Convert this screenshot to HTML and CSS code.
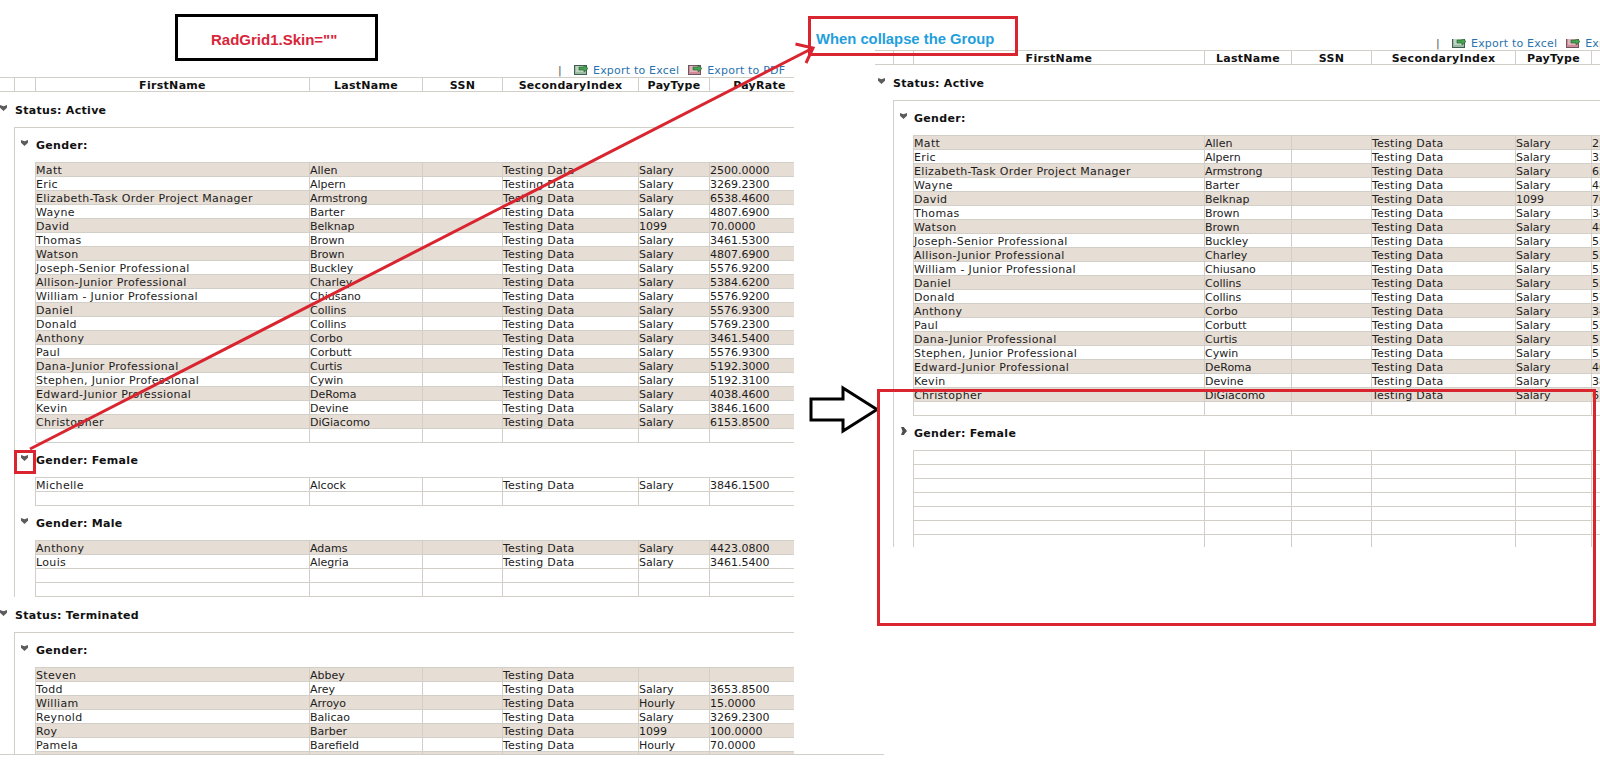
FILE: index.html
```html
<!DOCTYPE html>
<html lang="en">
<head>
<meta charset="utf-8">
<title>RadGrid group collapse</title>
<link rel="stylesheet" href="styles.css">
</head>
<body>
<section class="pane left">
  <div class="sheet">
    <div class="toolbar">
      <span class="pipe">|</span>
      <svg class="xl" viewBox="0 0 14 11"><rect x="0.5" y="1.5" width="12" height="9" fill="#9dbba0" stroke="#3f5f55"/><path d="M2 3h9M2 5h9M2 7h9" stroke="#e2ebe2"/><path d="M5 3h5V1l4 3.500-4 3.500V6H5z" fill="#47a34f" stroke="#1e5c2c" stroke-width="0.600"/></svg>
      <a class="link">Export to Excel</a>
      <svg class="xl pdf" viewBox="0 0 14 11"><rect x="0.5" y="1.500" width="12" height="9" fill="#d08a98" stroke="#6f5560"/><path d="M2 3h9M2 5h9M2 7h9" stroke="#f2dfe0"/><path d="M5 3h5V1l4 3.500-4 3.500V6H5z" fill="#47a34f" stroke="#1e5c2c" stroke-width="0.600"/></svg>
      <a class="link">Export to PDF</a>
    </div>
    <table class="g head">
      <colgroup><col class="h1"><col class="h2"><col class="c1"><col class="c2"><col class="c3"><col class="c4"><col class="c5"><col class="c6"></colgroup>
      <tr><th></th><th></th><th>FirstName</th><th>LastName</th><th>SSN</th><th>SecondaryIndex</th><th>PayType</th><th>PayRate</th></tr>
    </table>
    <div class="status"><i class="tog"></i>Status: Active</div>
    <div class="box">
      <div class="sub"><i class="tog"></i>Gender:</div>
      <table class="g data">
        <colgroup><col class="c1"><col class="c2"><col class="c3"><col class="c4"><col class="c5"><col class="c6"></colgroup>
        <tr class="alt"><td>Matt</td><td>Allen</td><td></td><td>Testing Data</td><td>Salary</td><td>2500.0000</td></tr>
        <tr><td>Eric</td><td>Alpern</td><td></td><td>Testing Data</td><td>Salary</td><td>3269.2300</td></tr>
        <tr class="alt"><td>Elizabeth-Task Order Project Manager</td><td>Armstrong</td><td></td><td>Testing Data</td><td>Salary</td><td>6538.4600</td></tr>
        <tr><td>Wayne</td><td>Barter</td><td></td><td>Testing Data</td><td>Salary</td><td>4807.6900</td></tr>
        <tr class="alt"><td>David</td><td>Belknap</td><td></td><td>Testing Data</td><td>1099</td><td>70.0000</td></tr>
        <tr><td>Thomas</td><td>Brown</td><td></td><td>Testing Data</td><td>Salary</td><td>3461.5300</td></tr>
        <tr class="alt"><td>Watson</td><td>Brown</td><td></td><td>Testing Data</td><td>Salary</td><td>4807.6900</td></tr>
        <tr><td>Joseph-Senior Professional</td><td>Buckley</td><td></td><td>Testing Data</td><td>Salary</td><td>5576.9200</td></tr>
        <tr class="alt"><td>Allison-Junior Professional</td><td>Charley</td><td></td><td>Testing Data</td><td>Salary</td><td>5384.6200</td></tr>
        <tr><td>William - Junior Professional</td><td>Chiusano</td><td></td><td>Testing Data</td><td>Salary</td><td>5576.9200</td></tr>
        <tr class="alt"><td>Daniel</td><td>Collins</td><td></td><td>Testing Data</td><td>Salary</td><td>5576.9300</td></tr>
        <tr><td>Donald</td><td>Collins</td><td></td><td>Testing Data</td><td>Salary</td><td>5769.2300</td></tr>
        <tr class="alt"><td>Anthony</td><td>Corbo</td><td></td><td>Testing Data</td><td>Salary</td><td>3461.5400</td></tr>
        <tr><td>Paul</td><td>Corbutt</td><td></td><td>Testing Data</td><td>Salary</td><td>5576.9300</td></tr>
        <tr class="alt"><td>Dana-Junior Professional</td><td>Curtis</td><td></td><td>Testing Data</td><td>Salary</td><td>5192.3000</td></tr>
        <tr><td>Stephen, Junior Professional</td><td>Cywin</td><td></td><td>Testing Data</td><td>Salary</td><td>5192.3100</td></tr>
        <tr class="alt"><td>Edward-Junior Professional</td><td>DeRoma</td><td></td><td>Testing Data</td><td>Salary</td><td>4038.4600</td></tr>
        <tr><td>Kevin</td><td>Devine</td><td></td><td>Testing Data</td><td>Salary</td><td>3846.1600</td></tr>
        <tr class="alt"><td>Christopher</td><td>DiGiacomo</td><td></td><td>Testing Data</td><td>Salary</td><td>6153.8500</td></tr>
        <tr><td></td><td></td><td></td><td></td><td></td><td></td></tr>
      </table>
      <div class="sub"><i class="tog"></i>Gender: Female</div>
      <table class="g data">
        <colgroup><col class="c1"><col class="c2"><col class="c3"><col class="c4"><col class="c5"><col class="c6"></colgroup>
        <tr><td>Michelle</td><td>Alcock</td><td></td><td>Testing Data</td><td>Salary</td><td>3846.1500</td></tr>
        <tr><td></td><td></td><td></td><td></td><td></td><td></td></tr>
      </table>
      <div class="sub"><i class="tog"></i>Gender: Male</div>
      <table class="g data">
        <colgroup><col class="c1"><col class="c2"><col class="c3"><col class="c4"><col class="c5"><col class="c6"></colgroup>
        <tr class="alt"><td>Anthony</td><td>Adams</td><td></td><td>Testing Data</td><td>Salary</td><td>4423.0800</td></tr>
        <tr><td>Louis</td><td>Alegria</td><td></td><td>Testing Data</td><td>Salary</td><td>3461.5400</td></tr>
        <tr><td></td><td></td><td></td><td></td><td></td><td></td></tr>
        <tr><td></td><td></td><td></td><td></td><td></td><td></td></tr>
      </table>
    </div>
    <div class="status"><i class="tog"></i>Status: Terminated</div>
    <div class="box">
      <div class="sub"><i class="tog"></i>Gender:</div>
      <table class="g data">
        <colgroup><col class="c1"><col class="c2"><col class="c3"><col class="c4"><col class="c5"><col class="c6"></colgroup>
        <tr class="alt"><td>Steven</td><td>Abbey</td><td></td><td>Testing Data</td><td></td><td></td></tr>
        <tr><td>Todd</td><td>Arey</td><td></td><td>Testing Data</td><td>Salary</td><td>3653.8500</td></tr>
        <tr class="alt"><td>William</td><td>Arroyo</td><td></td><td>Testing Data</td><td>Hourly</td><td>15.0000</td></tr>
        <tr><td>Reynold</td><td>Balicao</td><td></td><td>Testing Data</td><td>Salary</td><td>3269.2300</td></tr>
        <tr class="alt"><td>Roy</td><td>Barber</td><td></td><td>Testing Data</td><td>1099</td><td>100.0000</td></tr>
        <tr><td>Pamela</td><td>Barefield</td><td></td><td>Testing Data</td><td>Hourly</td><td>70.0000</td></tr>
        <tr class="alt"><td></td><td></td><td></td><td></td><td></td><td></td></tr>
      </table>
    </div>
  </div>
</section>

<section class="pane right">
  <div class="sheet">
    <div class="toolbar">
      <span class="pipe">|</span>
      <svg class="xl" viewBox="0 0 14 11"><rect x="0.5" y="1.5" width="12" height="9" fill="#9dbba0" stroke="#3f5f55"/><path d="M2 3h9M2 5h9M2 7h9" stroke="#e2ebe2"/><path d="M5 3h5V1l4 3.500-4 3.500V6H5z" fill="#47a34f" stroke="#1e5c2c" stroke-width="0.600"/></svg>
      <a class="link">Export to Excel</a>
      <svg class="xl pdf" viewBox="0 0 14 11"><rect x="0.5" y="1.500" width="12" height="9" fill="#d08a98" stroke="#6f5560"/><path d="M2 3h9M2 5h9M2 7h9" stroke="#f2dfe0"/><path d="M5 3h5V1l4 3.500-4 3.500V6H5z" fill="#47a34f" stroke="#1e5c2c" stroke-width="0.600"/></svg>
      <a class="link">Export to PDF</a>
    </div>
    <table class="g head">
      <colgroup><col class="h1"><col class="h2"><col class="c1"><col class="c2"><col class="c3"><col class="c4"><col class="c5"><col class="c6"></colgroup>
      <tr><th></th><th></th><th>FirstName</th><th>LastName</th><th>SSN</th><th>SecondaryIndex</th><th>PayType</th><th>PayRate</th></tr>
    </table>
    <div class="status"><i class="tog"></i>Status: Active</div>
    <div class="box">
      <div class="sub"><i class="tog"></i>Gender:</div>
      <table class="g data">
        <colgroup><col class="c1"><col class="c2"><col class="c3"><col class="c4"><col class="c5"><col class="c6"></colgroup>
        <tr class="alt"><td>Matt</td><td>Allen</td><td></td><td>Testing Data</td><td>Salary</td><td>2500.0000</td></tr>
        <tr><td>Eric</td><td>Alpern</td><td></td><td>Testing Data</td><td>Salary</td><td>3269.2300</td></tr>
        <tr class="alt"><td>Elizabeth-Task Order Project Manager</td><td>Armstrong</td><td></td><td>Testing Data</td><td>Salary</td><td>6538.4600</td></tr>
        <tr><td>Wayne</td><td>Barter</td><td></td><td>Testing Data</td><td>Salary</td><td>4807.6900</td></tr>
        <tr class="alt"><td>David</td><td>Belknap</td><td></td><td>Testing Data</td><td>1099</td><td>70.0000</td></tr>
        <tr><td>Thomas</td><td>Brown</td><td></td><td>Testing Data</td><td>Salary</td><td>3461.5300</td></tr>
        <tr class="alt"><td>Watson</td><td>Brown</td><td></td><td>Testing Data</td><td>Salary</td><td>4807.6900</td></tr>
        <tr><td>Joseph-Senior Professional</td><td>Buckley</td><td></td><td>Testing Data</td><td>Salary</td><td>5576.9200</td></tr>
        <tr class="alt"><td>Allison-Junior Professional</td><td>Charley</td><td></td><td>Testing Data</td><td>Salary</td><td>5384.6200</td></tr>
        <tr><td>William - Junior Professional</td><td>Chiusano</td><td></td><td>Testing Data</td><td>Salary</td><td>5576.9200</td></tr>
        <tr class="alt"><td>Daniel</td><td>Collins</td><td></td><td>Testing Data</td><td>Salary</td><td>5576.9300</td></tr>
        <tr><td>Donald</td><td>Collins</td><td></td><td>Testing Data</td><td>Salary</td><td>5769.2300</td></tr>
        <tr class="alt"><td>Anthony</td><td>Corbo</td><td></td><td>Testing Data</td><td>Salary</td><td>3461.5400</td></tr>
        <tr><td>Paul</td><td>Corbutt</td><td></td><td>Testing Data</td><td>Salary</td><td>5576.9300</td></tr>
        <tr class="alt"><td>Dana-Junior Professional</td><td>Curtis</td><td></td><td>Testing Data</td><td>Salary</td><td>5192.3000</td></tr>
        <tr><td>Stephen, Junior Professional</td><td>Cywin</td><td></td><td>Testing Data</td><td>Salary</td><td>5192.3100</td></tr>
        <tr class="alt"><td>Edward-Junior Professional</td><td>DeRoma</td><td></td><td>Testing Data</td><td>Salary</td><td>4038.4600</td></tr>
        <tr><td>Kevin</td><td>Devine</td><td></td><td>Testing Data</td><td>Salary</td><td>3846.1600</td></tr>
        <tr class="alt"><td>Christopher</td><td>DiGiacomo</td><td></td><td>Testing Data</td><td>Salary</td><td>6153.8500</td></tr>
        <tr><td></td><td></td><td></td><td></td><td></td><td></td></tr>
      </table>
      <div class="sub"><i class="tog closed"></i>Gender: Female</div>
      <table class="g data">
        <colgroup><col class="c1"><col class="c2"><col class="c3"><col class="c4"><col class="c5"><col class="c6"></colgroup>
        <tr><td></td><td></td><td></td><td></td><td></td><td></td></tr>
        <tr><td></td><td></td><td></td><td></td><td></td><td></td></tr>
        <tr><td></td><td></td><td></td><td></td><td></td><td></td></tr>
        <tr><td></td><td></td><td></td><td></td><td></td><td></td></tr>
        <tr><td></td><td></td><td></td><td></td><td></td><td></td></tr>
        <tr><td></td><td></td><td></td><td></td><td></td><td></td></tr>
        <tr><td></td><td></td><td></td><td></td><td></td><td></td></tr>
      </table>
    </div>
  </div>
</section>

<svg class="marks" viewBox="0 0 1600 766" aria-hidden="true">
  <path class="red" d="M30 449L813 48M795.500 44L813 48L806 63"/>
  <path class="big" d="M811 399H843V388L877 409.500L843 431V420H811Z"/>
</svg>
<div class="note skin">RadGrid1.Skin=""</div>
<div class="note when">When collapse the Group</div>
<div class="note hit"></div>
<div class="note area"></div>
</body>
</html>
```

FILE: styles.css
```css
html, body {
  margin: 0;
  padding: 0;
  width: 1600px;
  height: 766px;
  overflow: hidden;
  background: #fff;
}
body {
  position: relative;
  font: 11px/13px "DejaVu Sans", Verdana, sans-serif;
  color: #1c1c1c;
}

/* the two pasted grid captures */
.pane {
  position: absolute;
  overflow: hidden;
  --line: #d2cec8;
}
.left {
  left: 0;
  top: 63px;
  width: 884px;
  height: 692px;
  box-sizing: border-box;
  border-bottom: 1px solid var(--line);
  --i: 0px;
  --box: 14px;
  --t: 20px;
  --w: 774px;
  --hw: 809px;
  --sheet: 794px;
  --bar: 14px;
}
.right {
  left: 875px;
  top: 39px;
  width: 725px;
  height: 508px;
  --i: 3px;
  --box: 18px;
  --t: 19px;
  --w: 778px;
  --hw: 816px;
  --sheet: 725px;
  --bar: 11px;
}
.sheet {
  width: var(--sheet);
  height: 100%;
  overflow: hidden;
}

/* toolbar */
.toolbar {
  height: var(--bar);
  box-sizing: border-box;
  padding-left: calc(var(--i) + 558px);
  display: flex;
  align-items: flex-end;
  white-space: nowrap;
  overflow: hidden;
}
.pipe { width: 16px; flex: none; color: #555; }
.xl { width: 14px; height: 11px; flex: none; margin: 0 5px 2px 0; }
.pdf { margin-left: 9px; }
.link { flex: none; color: #2b73ad; letter-spacing: 0.2px; }

/* tables */
.g {
  table-layout: fixed;
  border-collapse: separate;
  border-spacing: 0;
  border-top: 1px solid var(--line);
}
.head { width: var(--hw); }
.data { width: var(--w); margin-left: var(--t); }
.g th, .g td {
  height: 14px;
  box-sizing: border-box;
  padding: 2px 0 0;
  line-height: 11px;
  border-left: 1px solid var(--line);
  border-bottom: 1px solid var(--line);
  white-space: nowrap;
}
.g td:nth-child(1) { letter-spacing: 0.33px; }
.g td:nth-child(4) { letter-spacing: 0.25px; }
.g th { font-weight: bold; text-align: center; color: #111; letter-spacing: 0.3px; }
.head th:first-child { border-left: 0; }
.alt td { background: #e6ddd4; }

.left .h1 { width: 14px; }
.left .h2 { width: 21px; }
.left .c1 { width: 274px; }
.left .c2 { width: 113px; }
.left .c3 { width: 80px; }
.left .c4 { width: 136px; }
.left .c5 { width: 71px; }
.left .c6 { width: 100px; }

.right .h1 { width: 18px; }
.right .h2 { width: 20px; }
.right .c1 { width: 291px; }
.right .c2 { width: 87px; }
.right .c3 { width: 80px; }
.right .c4 { width: 144px; }
.right .c5 { width: 76px; }
.right .c6 { width: 100px; }

/* group headings */
.status, .sub {
  display: flex;
  align-items: center;
  font-weight: bold;
  color: #111;
  letter-spacing: 0.3px;
}
.status {
  height: 35px;
  box-sizing: border-box;
  padding: 1px 0 0 var(--i);
}
.box {
  margin-left: var(--box);
  border-left: 1px solid var(--line);
  border-top: 1px solid var(--line);
}
.sub {
  height: 34px;
  padding-left: 6px;
}
.tog {
  flex: none;
  width: 7px;
  height: 6px;
  margin: -4px 8px 0 0;
  background: #5c5c5c;
  clip-path: polygon(0 0, 50% 22%, 100% 0, 100% 45%, 50% 100%, 0 45%);
}
.sub .tog { margin-right: calc(var(--t) - 12px); }
.tog.closed {
  width: 6px;
  height: 8px;
  margin-left: 1px;
  margin-right: 7px;
  clip-path: polygon(0 0, 45% 0, 100% 50%, 45% 100%, 0 100%, 25% 50%);
  background: #4c4c4c;
}

/* hand-drawn annotations over the captures */
.marks {
  position: absolute;
  left: 0;
  top: 0;
  width: 1600px;
  height: 766px;
}
.red { fill: none; stroke: #d9252f; stroke-width: 3; }
.big { fill: #fff; stroke: #000; stroke-width: 3; }

.note {
  position: absolute;
  box-sizing: border-box;
  font-family: "Liberation Sans", Arial, sans-serif;
  font-weight: bold;
}
.skin {
  left: 175px;
  top: 14px;
  width: 203px;
  height: 47px;
  border: 3px solid #000;
  background: #fff;
  color: #d9253a;
  font-size: 15px;
  line-height: 45px;
  padding-left: 33px;
}
.when {
  left: 808px;
  top: 16px;
  width: 210px;
  height: 40px;
  border: 3px solid #d9252f;
  color: #1f9fdc;
  font-size: 14.800px;
  line-height: 40px;
  padding-left: 5px;
}
.hit {
  left: 14px;
  top: 450px;
  width: 22px;
  height: 24px;
  border: 3px solid #d9252f;
}
.area {
  left: 877px;
  top: 389px;
  width: 719px;
  height: 237px;
  border: 3px solid #d9252f;
}
```
